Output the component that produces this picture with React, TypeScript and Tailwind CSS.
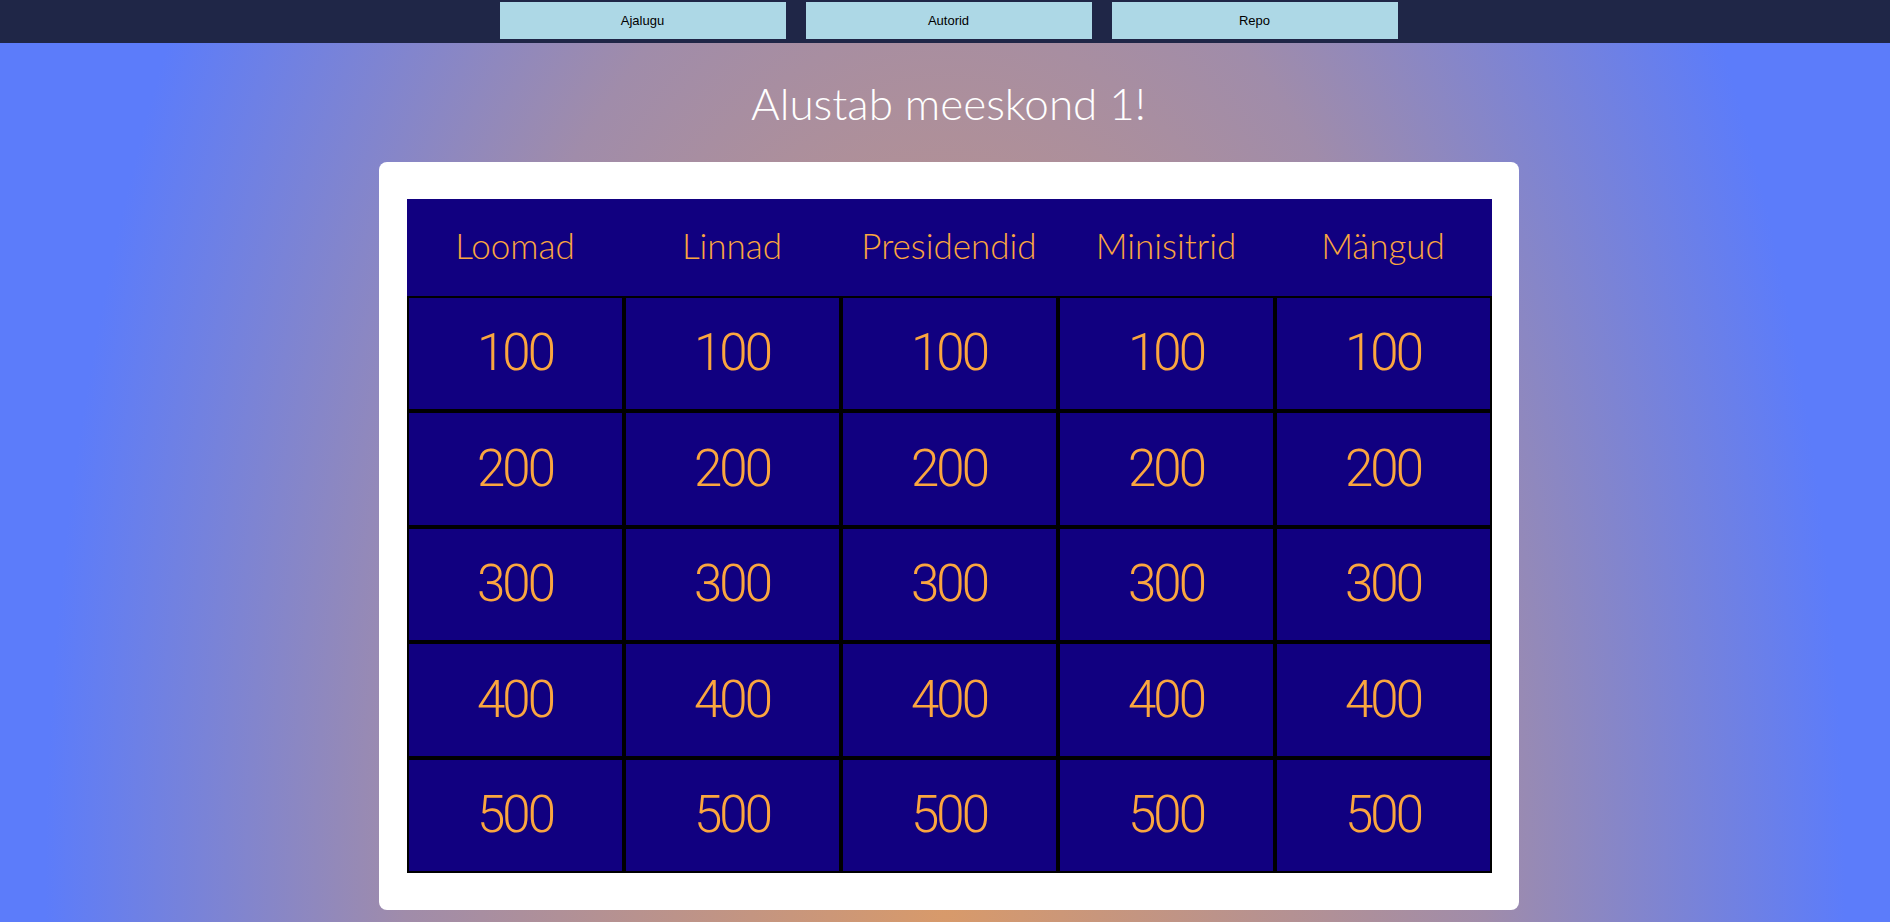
const categories = ['Loomad', 'Linnad', 'Presidendid', 'Minisitrid', 'Mängud'];
const values = [100, 200, 300, 400, 500];

const NavButton = ({ label }: { label: string }) => (
  <button className="w-[286px] h-[37px] bg-[#add8e6] text-[13px] text-black font-['Liberation_Sans',Arial,sans-serif]">
    {label}
  </button>
);

export default function App() {
  return (
    <div className="min-h-screen bg-[radial-gradient(ellipse_900px_1700px_at_50%_900px,#d89a6a_0%,#a08caa_60%,#5c7cfa_100%)] font-['Lato',sans-serif] pb-10">
      <nav className="h-[43px] bg-[#1f2647] flex justify-center gap-5 pt-[2px] pl-[7px]">
        <NavButton label="Ajalugu" />
        <NavButton label="Autorid" />
        <NavButton label="Repo" />
      </nav>

      <main className="pl-[7px]">
        <h1 className="mt-[35px] mb-[34px] h-[50px] leading-[50px] text-center text-white text-[44px] font-light">
          Alustab meeskond 1!
        </h1>

        <div className="w-[1140px] mx-auto bg-white rounded-lg px-[28px] py-[37px]">
          <div className="grid grid-cols-5 w-[1085px] bg-[#110080]">
            {categories.map((c) => (
              <div key={c} className="h-[97px] pb-[5px] flex items-center justify-center text-[#fba63f] text-[35px] font-light">
                {c}
              </div>
            ))}
            {values.map((v) =>
              categories.map((c) => (
                <div
                  key={c + v}
                  className="h-[115.4px] border-2 border-black flex items-center justify-center text-[#fba63f] text-[51px] font-light font-['Roboto',sans-serif] tracking-[-3px] cursor-pointer"
                >
                  {v}
                </div>
              ))
            )}
          </div>
        </div>
      </main>
    </div>
  );
}
